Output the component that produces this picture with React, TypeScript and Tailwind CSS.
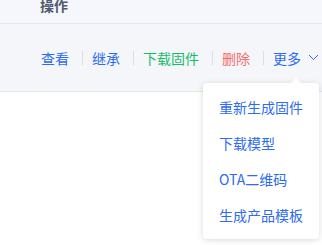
import React from "react";

const Sep = () => <span className="ml-[13px] mr-[9px] inline-block h-[14px] w-px bg-[#dcdee2]" />;

export default function App() {
  const font = { fontFamily: '"Noto Sans CJK SC", "Noto Sans", sans-serif' };
  return (
    <div className="relative h-[245px] w-[322px] overflow-hidden bg-white" style={font}>
      <div className="h-[24px] overflow-hidden border-b border-[#e4e7ed] bg-[#f5f7fc] pl-[40px]">
        <div className="mt-[-2px] text-[14px] font-semibold leading-[14px] text-[#515a6e]">操作</div>
      </div>
      <div className="flex h-[68px] items-center border-b border-[#e4e7ed] bg-[#f5f6fa] pl-[41px] text-[14px] leading-[20px]">
        <span className="text-[#2d6cf0]">查看</span>
        <Sep />
        <span className="text-[#2d6cf0]">继承</span>
        <Sep />
        <span className="text-[#19be6b]">下载固件</span>
        <Sep />
        <span className="text-[#f56c6c]">删除</span>
        <Sep />
        <span className="text-[#2d6cf0]">更多</span>
        <svg className="ml-[7px]" width="11" height="7" viewBox="0 0 11 7" fill="none">
          <path d="M1 1l4.5 4.5L10 1" stroke="#2d6cf0" strokeWidth="1" />
        </svg>
      </div>
      <div className="absolute left-[203px] top-[83px] w-[116px] rounded-[4px] bg-white py-[6px] shadow-[0_1px_6px_rgba(0,0,0,0.15)]">
        <div className="absolute right-[17px] top-[-5px] h-0 w-0 border-x-[6px] border-b-[6px] border-x-transparent border-b-white" />
        {["重新生成固件", "下载模型", "OTA二维码", "生成产品模板"].map((t) => (
          <div key={t} className="flex h-[36px] items-center whitespace-nowrap px-4 text-[14px] text-[#2d6cf0]">
            {t}
          </div>
        ))}
      </div>
    </div>
  );
}
